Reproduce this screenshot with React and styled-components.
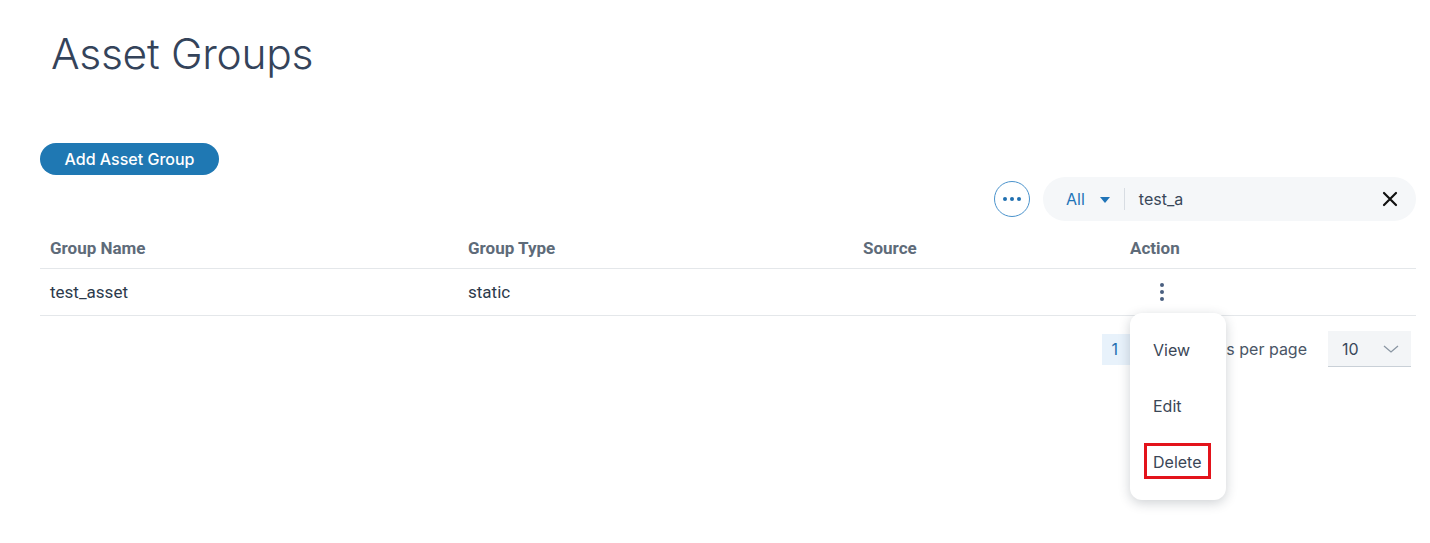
import React from "react";
import styled, { createGlobalStyle } from "styled-components";

const Global = createGlobalStyle`
  html, body { margin: 0; padding: 0; background: #fff; }
  body { font-family: Roboto, "Noto Sans", Arial, sans-serif; color: #39485a; }
  * { box-sizing: border-box; }
`;

const Page = styled.div`
  padding: 0 14px 0 40px;
  width: 1430px;
  min-height: 543px;
`;

const Title = styled.h1`
  margin: 0;
  padding: 27px 0 0 11px;
  height: 100px;
  font-family: Inter, "Open Sans", sans-serif;
  font-weight: 300;
  font-size: 42.5px;
  line-height: 54px;
  letter-spacing: -0.3px;
  color: #34435a;
`;

const ActionBar = styled.div`
  padding-top: 43px;
  display: flex;
`;

const PrimaryButton = styled.button`
  height: 32px;
  width: 179px;
  border: none;
  border-radius: 16px;
  background: #1f78b3;
  color: #fff;
  font-family: Inter, "Open Sans", sans-serif;
  font-weight: 500;
  font-size: 16px;
  padding: 0;
`;

const FilterRow = styled.div`
  margin-top: 2px;
  display: flex;
  justify-content: flex-end;
  align-items: center;
  gap: 13px;
  height: 44px;
`;

const CircleButton = styled.button`
  width: 36px;
  height: 36px;
  border-radius: 50%;
  border: 1.5px solid #4b93cc;
  background: #fff;
  display: flex;
  align-items: center;
  justify-content: center;
  gap: 3px;
  padding: 0;
`;

const Dot = styled.span`
  width: 4px;
  height: 4px;
  border-radius: 50%;
  background: ${(p) => p.$color || "#1f6fb0"};
`;

const SearchPill = styled.div`
  width: 373px;
  height: 44px;
  border-radius: 22px;
  background: #f5f7f9;
  display: flex;
  align-items: center;
  padding: 0 18px 0 23px;
  font-family: Inter, "Open Sans", sans-serif;
`;

const ScopeSelect = styled.div`
  display: flex;
  align-items: center;
  gap: 15px;
  color: #1f74b8;
  font-size: 16px;
  padding-right: 14px;
  border-right: 1px solid #d8dde3;
  height: 22px;
`;

const Caret = styled.span`
  width: 0;
  height: 0;
  border-left: 5px solid transparent;
  border-right: 5px solid transparent;
  border-top: 6px solid #1f74b8;
  margin-top: 2px;
`;

const SearchText = styled.span`
  flex: 1;
  padding-left: 14px;
  font-size: 16px;
  color: #39485a;
`;

const ClearIcon = styled.svg`
  width: 16px;
  height: 16px;
`;

const Grid = styled.div`
  display: grid;
  grid-template-columns: 418px 395px 267px 1fr;
  align-items: center;
  border-bottom: 1.5px solid #e4e7ea;
  height: ${(p) => p.$h}px;
  padding-top: ${(p) => p.$pt || 0}px;
`;

const Cell = styled.div`
  padding-left: 10px;
  font-size: 17px;
  font-weight: ${(p) => (p.$head ? 700 : 400)};
  color: ${(p) => (p.$head ? "#5e6b79" : "#2c3a4b")};
  position: relative;
`;

const Kebab = styled.div`
  display: flex;
  flex-direction: column;
  gap: 3px;
  padding-left: 30px;
`;

const Menu = styled.div`
  position: absolute;
  top: 30px;
  left: 10px;
  width: 96px;
  height: 187px;
  background: #fff;
  border-radius: 12px;
  box-shadow: 0 3px 12px rgba(30, 45, 60, 0.22);
  display: flex;
  flex-direction: column;
  padding: 26px 0 0 23px;
  gap: 34px;
  z-index: 2;
`;

const MenuItem = styled.div`
  font-family: Inter, "Open Sans", sans-serif;
  font-size: 16px;
  line-height: 22px;
  color: #3a4656;
  position: relative;
  ${(p) =>
    p.$marked &&
    `
    &::after {
      content: "";
      position: absolute;
      left: -9px;
      top: -8px;
      width: 67px;
      height: 36px;
      border: 3px solid #e3131b;
      box-sizing: border-box;
    }
  `}
`;

const Pager = styled.div`
  display: flex;
  justify-content: flex-end;
  align-items: center;
  padding: 15px 5px 0 0;
  font-family: Inter, "Open Sans", sans-serif;
`;

const PageNum = styled.div`
  width: 30px;
  height: 31px;
  background: #e8f2fb;
  color: #1f6fb0;
  font-size: 16px;
  display: flex;
  align-items: center;
  padding-left: 9px;
`;

const PageArrow = styled.span`
  width: 30px;
  text-align: center;
  color: #b7c0c9;
  font-size: 16px;
  margin-right: 31px;
`;

const PerPage = styled.span`
  font-size: 16px;
  color: #4a5666;
  margin-right: 21px;
`;

const SizeSelect = styled.div`
  width: 83px;
  height: 36px;
  background: #f3f5f7;
  border-bottom: 1.5px solid #c9d0d7;
  display: flex;
  align-items: center;
  padding: 0 12px 0 14px;
  justify-content: space-between;
  font-size: 16px;
  color: #39485a;
`;

export default function App() {
  return (
    <>
      <Global />
      <Page>
        <Title>Asset Groups</Title>
        <ActionBar>
          <PrimaryButton>Add Asset Group</PrimaryButton>
        </ActionBar>
        <FilterRow>
          <CircleButton aria-label="more">
            <Dot />
            <Dot />
            <Dot />
          </CircleButton>
          <SearchPill>
            <ScopeSelect>
              All <Caret />
            </ScopeSelect>
            <SearchText>test_a</SearchText>
            <ClearIcon viewBox="0 0 16 16">
              <path d="M2 2 L14 14 M14 2 L2 14" stroke="#111" strokeWidth="2.2" strokeLinecap="round" />
            </ClearIcon>
          </SearchPill>
        </FilterRow>
        <Grid $h={48} $pt={6}>
          <Cell $head>Group Name</Cell>
          <Cell $head>Group Type</Cell>
          <Cell $head>Source</Cell>
          <Cell $head>Action</Cell>
        </Grid>
        <Grid $h={47}>
          <Cell>test_asset</Cell>
          <Cell>static</Cell>
          <Cell></Cell>
          <Cell>
            <Kebab>
              <Dot $color="#4a5f80" />
              <Dot $color="#4a5f80" />
              <Dot $color="#4a5f80" />
            </Kebab>
            <Menu>
              <MenuItem>View</MenuItem>
              <MenuItem>Edit</MenuItem>
              <MenuItem $marked>Delete</MenuItem>
            </Menu>
          </Cell>
        </Grid>
        <Pager>
          <PageNum>1</PageNum>
          <PageArrow>›</PageArrow>
          <PerPage>Items per page</PerPage>
          <SizeSelect>
            10
            <svg width="16" height="10" viewBox="0 0 16 10">
              <path d="M1 2 L8 8 L15 2" fill="none" stroke="#8a96a3" strokeWidth="1.3" />
            </svg>
          </SizeSelect>
        </Pager>
      </Page>
    </>
  );
}
